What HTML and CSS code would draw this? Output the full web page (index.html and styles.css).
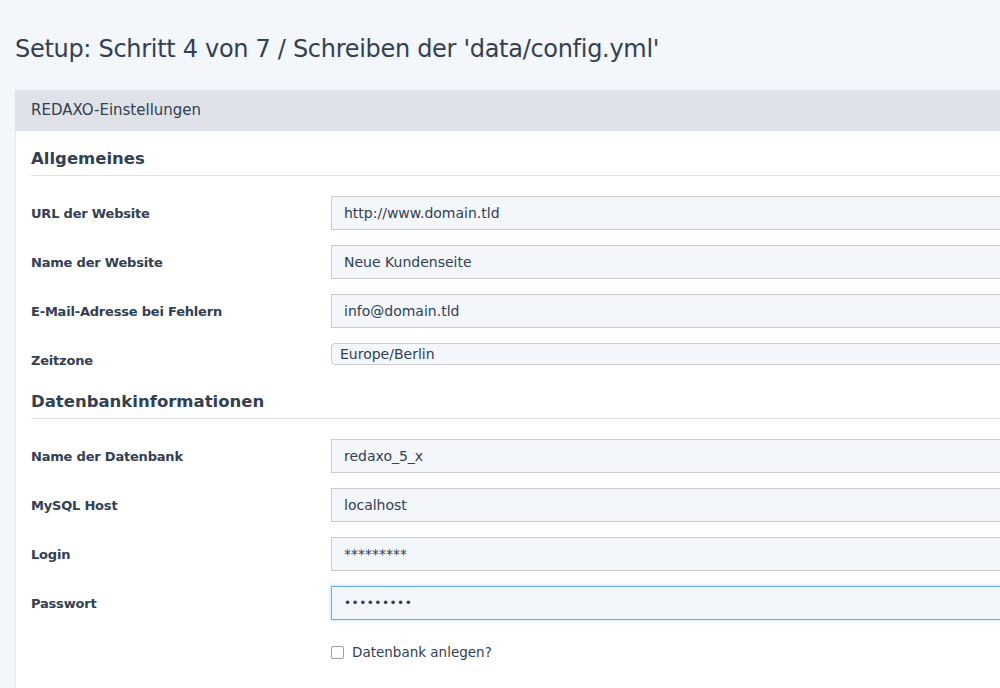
FILE: index.html
```html
<!DOCTYPE html>
<html lang="de">
<head>
<meta charset="utf-8">
<title>Setup</title>
<link rel="stylesheet" href="styles.css">
</head>
<body>
<div class="page">
  <h1 class="title">Setup: Schritt 4 von 7 / Schreiben der 'data/config.yml'</h1>
  <section class="panel">
    <header class="panel-head">REDAXO-Einstellungen</header>
    <div class="panel-body">
      <div class="fieldset">
        <h2 class="legend">Allgemeines</h2>
        <div class="row"><label class="label">URL der Website</label><div class="field"><input class="input" type="text" value="http://www.domain.tld"></div></div>
        <div class="row"><label class="label">Name der Website</label><div class="field"><input class="input" type="text" value="Neue Kundenseite"></div></div>
        <div class="row"><label class="label">E-Mail-Adresse bei Fehlern</label><div class="field"><input class="input" type="text" value="info@domain.tld"></div></div>
        <div class="row"><label class="label">Zeitzone</label><div class="field field-top"><div class="select">Europe/Berlin</div></div></div>
      </div>
      <div class="fieldset fieldset-second">
        <h2 class="legend">Datenbankinformationen</h2>
        <div class="row"><label class="label">Name der Datenbank</label><div class="field"><input class="input" type="text" value="redaxo_5_x"></div></div>
        <div class="row"><label class="label">MySQL Host</label><div class="field"><input class="input" type="text" value="localhost"></div></div>
        <div class="row"><label class="label">Login</label><div class="field"><input class="input" type="text" value="*********"></div></div>
        <div class="row"><label class="label">Passwort</label><div class="field"><div class="input input-focus">•••••••••</div></div></div>
        <div class="row"><span class="label"></span><div class="field"><label class="check"><span class="box"></span>Datenbank anlegen?</label></div></div>
      </div>
    </div>
  </section>
</div>
</body>
</html>
```
FILE: styles.css
```css
html, body {
  margin: 0;
  overflow: hidden;
  height: 100%;
}
body {
  background: #f3f6fb;
  font-family: "DejaVu Sans", "Liberation Sans", sans-serif;
  color: #324050;
}
.page {
  width: 1400px;
  padding-left: 15px;
}
.title {
  margin: 34px 0 26px 0;
  font-size: 24px;
  line-height: 30px;
  font-weight: normal;
  color: #324050;
  letter-spacing: -0.3px;
}
.panel-head {
  height: 41px;
  line-height: 41px;
  padding-left: 16px;
  background: #dfe3e9;
  font-size: 15px;
  color: #324050;
}
.panel-body {
  background: #fff;
  padding: 16px 16px 40px 15px;
  border-left: 1px solid #e6e9ef;
}
.fieldset {
  display: flex;
  flex-direction: column;
  gap: 15px;
}
.fieldset-second {
  margin-top: 13px;
}
.legend {
  margin: 0 0 5px 0;
  font-size: 16.5px;
  line-height: 24px;
  font-weight: bold;
  padding-bottom: 4px;
  border-bottom: 1px solid #dfe3e9;
  color: #324050;
}
.row {
  display: grid;
  grid-template-columns: 300px 1fr;
  height: 34px;
}
.label {
  display: flex;
  align-items: center;
  font-size: 13px;
  font-weight: bold;
  color: #324050;
  letter-spacing: -0.2px;
}
.field {
  display: flex;
  align-items: center;
}
.field-top {
  align-items: flex-start;
}
.input {
  box-sizing: border-box;
  width: 100%;
  height: 34px;
  border: 1px solid #c9cbcf;
  background: #f3f6fb;
  padding: 0 12px;
  font-family: "DejaVu Sans", sans-serif;
  font-size: 14px;
  color: #324050;
  display: flex;
  align-items: center;
  outline: none;
}
.input-focus {
  border-color: #6aaeeb;
  box-shadow: 0 0 4px rgba(106, 174, 235, 0.5);
  letter-spacing: 0.5px;
  font-size: 12px;
}
.select {
  box-sizing: border-box;
  width: 100%;
  height: 22px;
  border: 1px solid #c9cbcf;
  border-radius: 4px;
  background: #f3f6fb;
  padding-left: 8px;
  font-size: 14px;
  line-height: 20px;
  color: #324050;
}
.check {
  display: flex;
  align-items: center;
  font-size: 13.5px;
  color: #324050;
}
.box {
  width: 11px;
  height: 11px;
  border: 1px solid #9a9ea6;
  border-radius: 2px;
  background: #fff;
  margin-right: 8px;
}
```
